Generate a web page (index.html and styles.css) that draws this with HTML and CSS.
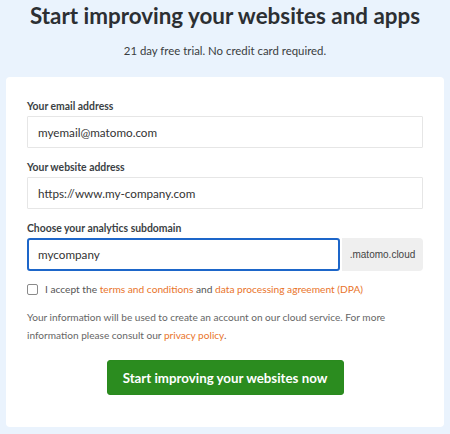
FILE: index.html
```html
<!DOCTYPE html>
<html>
<head>
<meta charset="utf-8">
<link rel="stylesheet" href="styles.css">
</head>
<body>
<h1 class="title">Start improving your websites and apps</h1>
<p class="subtitle">21 day free trial. No credit card required.</p>
<div class="card">
  <div class="field">
    <label class="label">Your email address</label>
    <div class="input">myemail@matomo.com</div>
  </div>
  <div class="field">
    <label class="label">Your website address</label>
    <div class="input">https://www.my-company.com</div>
  </div>
  <div class="field last">
    <label class="label">Choose your analytics subdomain</label>
    <div class="group">
      <div class="input focus">mycompany</div>
      <div class="addon">.matomo.cloud</div>
    </div>
  </div>
  <div class="check">
    <span class="box"></span>
    <span>I accept the <a class="link">terms and conditions</a> and <a class="link">data processing agreement (DPA)</a></span>
  </div>
  <p class="info">Your information will be used to create an account on our cloud service. For more information please consult our <a class="link">privacy policy</a>.</p>
  <div class="actions">
    <button class="btn">Start improving your websites now</button>
  </div>
</div>
</body>
</html>
```
FILE: styles.css
```css
html, body {
  margin: 0;
  padding: 0;
}
body {
  background: #eaf3fd;
  font-family: Lato, "Noto Sans", sans-serif;
  color: #333;
  width: 450px;
  height: 434px;
  overflow: hidden;
}
.title {
  margin: 0;
  padding-top: 2px;
  font-size: 22.4px;
  line-height: 28px;
  font-weight: 700;
  text-align: center;
  color: #2c2f33;
}
.subtitle {
  margin: 13px 0 0;
  font-size: 11.4px;
  line-height: 16px;
  text-align: center;
  color: #3a3d40;
}
.card {
  box-sizing: border-box;
  margin: 18px 6px 0;
  background: #fff;
  border-radius: 4px;
  padding: 22px 21px 0;
  height: 350px;
}
.field {
  margin-bottom: 12px;
}
.field.last {
  margin-bottom: 10px;
}
.label {
  display: block;
  font-size: 10.4px;
  font-weight: 700;
  color: #3b3f44;
  line-height: 14px;
  margin-bottom: 3px;
}
.input {
  box-sizing: border-box;
  height: 32px;
  border: 1px solid #e6e6e6;
  padding: 0 10px;
  font-size: 11.7px;
  line-height: 30px;
  color: #333;
  border-radius: 1px;
}
.group {
  display: flex;
  align-items: stretch;
}
.group .input {
  flex: 1;
  height: 33px;
}
.input.focus {
  border: 2px solid #1d66c9;
  border-radius: 3px;
  padding: 0 9px;
  line-height: 29px;
}
.addon {
  margin-left: 2px;
  width: 81px;
  background: #efefef;
  border-radius: 0 4px 4px 0;
  font-family: "Liberation Sans", Arial, sans-serif;
  font-size: 10px;
  color: #444;
  display: flex;
  align-items: center;
  justify-content: center;
}
.check {
  display: flex;
  align-items: center;
  font-size: 10.2px;
  line-height: 16px;
  color: #555;
}
.box {
  width: 9px;
  height: 9px;
  border: 1px solid #8a8a8a;
  border-radius: 2px;
  margin-right: 7px;
  flex: none;
}
.link {
  color: #e9742a;
  text-decoration: none;
}
.info {
  margin: 11px 0 0;
  font-size: 10.1px;
  line-height: 18px;
  color: #666;
}
.actions {
  display: flex;
  justify-content: center;
  margin-top: 16px;
}
.btn {
  width: 237px;
  height: 35px;
  background: #2b8c1f;
  border: 1px solid #2a8a1e;
  border-radius: 3px;
  color: #fff;
  font-family: inherit;
  font-size: 13.3px;
  font-weight: 700;
  padding: 0;
}
```
